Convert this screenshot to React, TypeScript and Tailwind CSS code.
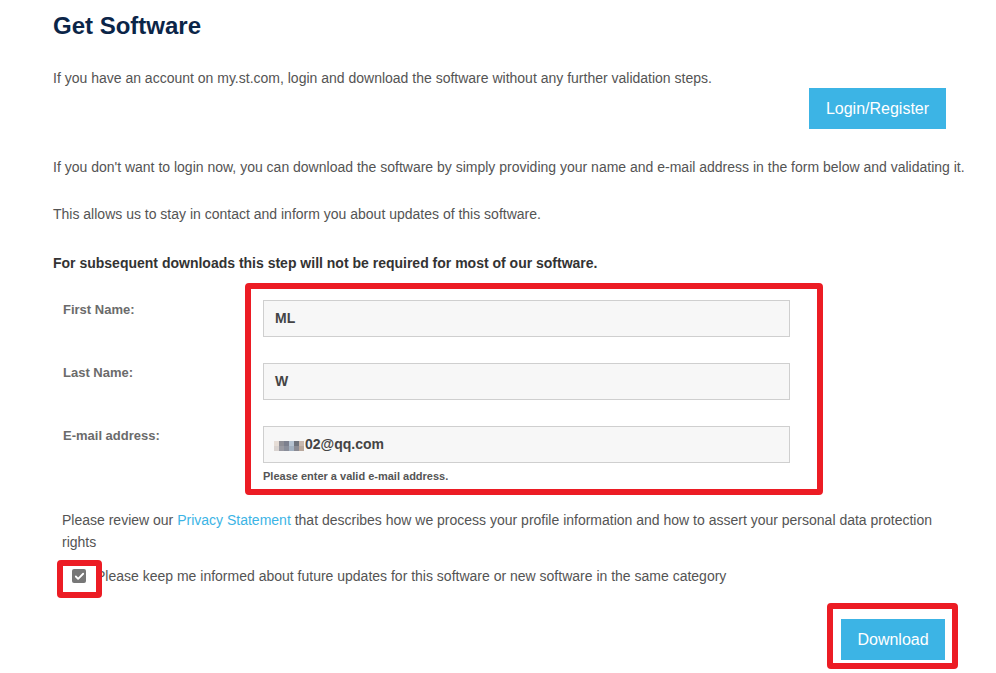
import { Check } from "lucide-react";

const fields = [
  { label: "First Name:", value: "ML" },
  { label: "Last Name:", value: "W" },
];

// pixelated blur that hides the start of the e-mail address
const blurCells = [
  ["#e6ddd6", "#8f8f96", "#7c808e", "#b5c2d0", "#6f737c", "#c8b8ae"],
  ["#d9d3d0", "#9a9aa2", "#8a8e9a", "#a2b0c0", "#8a8a92", "#b9a89c"],
];

function RedFrame({ className }: { className: string }) {
  return <div className={`pointer-events-none absolute rounded-[4px] border-[6px] border-[#ec1c24] ${className}`} />;
}

export default function App() {
  return (
    <div className="min-h-[673px] w-[996px] bg-white pl-[53px] text-[14px] text-[#545454] [font-family:'Liberation_Sans',Arial,sans-serif]">
      <h1 className="pt-[12px] text-[24px] font-bold leading-[28px] text-[#0b2548]">Get Software</h1>

      <p className="mt-[28px] leading-[20px]">
        If you have an account on my.st.com, login and download the software without any further validation steps.
      </p>
      <div className="flex justify-end pr-[50px]">
        <button className="h-[41px] w-[137px] bg-[#3cb4e5] text-[16px] text-white">Login/Register</button>
      </div>

      <p className="mt-[28px] leading-[20px]">
        If you don't want to login now, you can download the software by simply providing your name and e-mail address in the form below and validating it.
      </p>
      <p className="mt-[27px] leading-[20px]">This allows us to stay in contact and inform you about updates of this software.</p>
      <p className="mt-[29px] font-bold leading-[20px] text-[#333]">
        For subsequent downloads this step will not be required for most of our software.
      </p>

      <div className="relative mt-[27px] flex flex-col gap-[26px]">
        {fields.map((f) => (
          <div key={f.label} className="flex">
            <label className="w-[210px] pl-[10px] pt-[2px] text-[13px] font-bold leading-[16px] text-[#6b6b6b]">{f.label}</label>
            <div className="flex h-[37px] w-[527px] items-center border border-[#cfcfcf] bg-[#f7f7f7] px-[11px] text-[14px] font-bold text-[#444]">
              {f.value}
            </div>
          </div>
        ))}
        <div className="flex">
          <label className="w-[210px] pl-[10px] pt-[2px] text-[13px] font-bold leading-[16px] text-[#6b6b6b]">E-mail address:</label>
          <div className="flex flex-col">
            <div className="flex h-[37px] w-[527px] items-center border border-[#cfcfcf] bg-[#f7f7f7] px-[10px] text-[14px] font-bold text-[#444]">
              <span className="mr-[1px] mt-[2px] flex flex-col">
                {blurCells.map((row, i) => (
                  <span key={i} className="flex">
                    {row.map((c, j) => (
                      <span key={j} className="h-[5px] w-[5px]" style={{ backgroundColor: c }} />
                    ))}
                  </span>
                ))}
              </span>
              02@qq.com
            </div>
            <span className="mt-[6px] text-[11px] font-bold leading-[14px] text-[#555]">Please enter a valid e-mail address.</span>
          </div>
        </div>
        <RedFrame className="left-[192px] top-[-17px] h-[212px] w-[578px]" />
      </div>

      <p className="mt-[26px] w-[885px] pl-[9px] leading-[22px]">
        Please review our <a className="text-[#3cb4e5]">Privacy Statement</a> that describes how we process your profile information and how to assert your personal data protection rights
      </p>

      <div className="relative mt-[13px] flex items-center pl-[19px] leading-[20px]">
        <span className="mr-[10px] flex h-[14px] w-[14px] items-center justify-center rounded-[2px] bg-[#777]">
          <Check className="h-[11px] w-[11px] text-white" strokeWidth={4} />
        </span>
        <span>Please keep me informed about future updates for this software or new software in the same category</span>
        <RedFrame className="left-[4px] top-[-6px] h-[38px] w-[45px]" />
      </div>

      <div className="relative mt-[33px] flex justify-end pr-[51px]">
        <button className="h-[41px] w-[104px] bg-[#3cb4e5] text-[16px] text-white">Download</button>
        <RedFrame className="right-[38px] top-[-16px] h-[66px] w-[131px]" />
      </div>
    </div>
  );
}
